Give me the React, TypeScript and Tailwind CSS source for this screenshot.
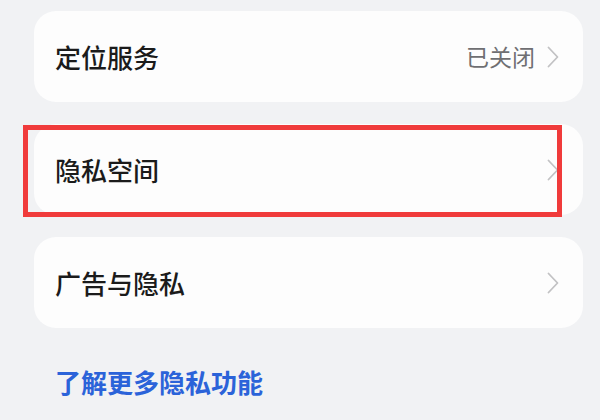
import React from 'react';

const Chevron = () => (
  <svg width="12" height="22" viewBox="0 0 12 22" fill="none" className="shrink-0">
    <polyline
      points="1.5,1.5 10.5,11 1.5,20.5"
      stroke="#c2c2c4"
      strokeWidth="1.8"
      strokeLinecap="round"
      strokeLinejoin="round"
    />
  </svg>
);

interface RowProps {
  title: string;
  value?: string;
  highlighted?: boolean;
}

const SettingRow = ({ title, value, highlighted }: RowProps) => (
  <div className="relative h-[91px] w-[549px] rounded-[22px] bg-[#fdfdfd] pl-[21px] pr-[24px] flex items-center justify-between">
    <span className="text-[26px] font-medium text-[#1b1b1b] leading-none">{title}</span>
    <div className="flex items-center gap-[12px]">
      {value && <span className="text-[23px] text-[#6f6f72] leading-none">{value}</span>}
      <Chevron />
    </div>
    {highlighted && (
      <div className="absolute -left-[11px] top-[1px] w-[539px] h-[92px] border-[5px] border-[#f03b3b] pointer-events-none" />
    )}
  </div>
);

export default function App() {
  return (
    <div
      className="w-[600px] h-[420px] overflow-hidden bg-[#f1f2f4] pt-[11px] pl-[34px]"
      style={{ fontFamily: '"Noto Sans CJK SC", "Noto Sans", sans-serif' }}
    >
      <div className="flex flex-col gap-[22px]">
        <SettingRow title="定位服务" value="已关闭" />
        <SettingRow title="隐私空间" highlighted />
        <SettingRow title="广告与隐私" />
      </div>
      <div className="mt-[36px] pl-[21px] text-[26px] font-bold text-[#2b63d9] leading-[36px]">
        了解更多隐私功能
      </div>
    </div>
  );
}
